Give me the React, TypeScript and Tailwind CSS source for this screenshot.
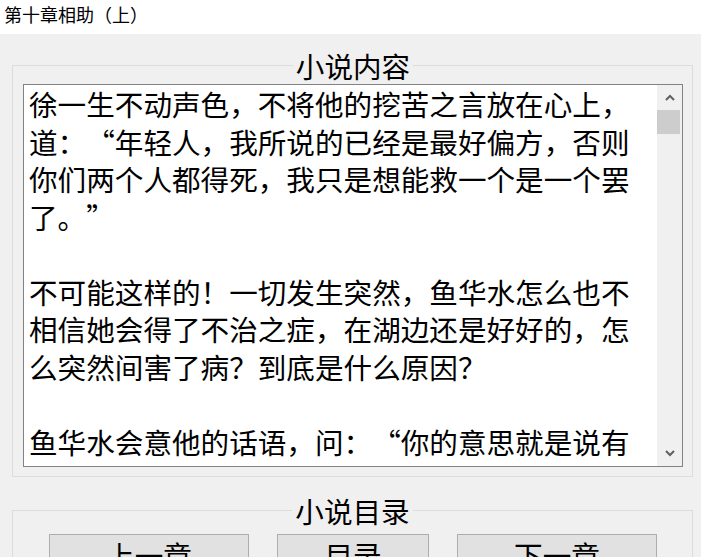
import React from 'react';

const contentLines = [
  '徐一生不动声色，不将他的挖苦之言放在心上，',
  '道：“年轻人，我所说的已经是最好偏方，否则',
  '你们两个人都得死，我只是想能救一个是一个罢',
  '了。”',
  '',
  '不可能这样的！一切发生突然，鱼华水怎么也不',
  '相信她会得了不治之症，在湖边还是好好的，怎',
  '么突然间害了病？到底是什么原因？',
  '',
  '鱼华水会意他的话语，问：“你的意思就是说有',
  '办法可以救她一个人，只是要付出一些代价？”',
];

// Chinese quotes take a full em, like the Windows font does
const renderLine = (line: string) =>
  line.split(/([“”])/).map((part, i) => {
    if (part === '“') return <span key={i} className="inline-block w-[1em] text-right">{part}</span>;
    if (part === '”') return <span key={i} className="inline-block w-[1em] text-left">{part}</span>;
    return part;
  });

const Chevron: React.FC<{ up?: boolean }> = ({ up }) => (
  <svg width="10" height="7" viewBox="0 0 10 7">
    <path
      d={up ? 'M1 6 L5 2 L9 6' : 'M1 1 L5 5 L9 1'}
      fill="none"
      stroke="#606060"
      strokeWidth="2"
    />
  </svg>
);

const NavButton: React.FC<{ label: string; width: string }> = ({ label, width }) => (
  <button
    type="button"
    className={`${width} h-[40px] shrink-0 border border-[#adadad] bg-[#e1e1e1] text-[28.6px] leading-[37px] flex items-center justify-center`}
  >
    {label}
  </button>
);

export default function App() {
  return (
    <div className="w-[701px] h-[557px] overflow-hidden bg-[#f0f0f0] text-black font-['Noto_Sans_CJK_SC',sans-serif]">
      <div className="h-[34px] bg-white pl-[4px] pt-[2px] text-[18px] leading-[24px]">第十章相助（上）</div>

      <div className="px-[12px] pt-[13px]">
        {/* 小说内容 */}
        <fieldset className="w-[681px] border border-[#dcdcdc] pl-[10px] pr-[9px] pb-[9px]">
          <legend className="mx-auto px-[3px] text-[28.6px] leading-[37px]">小说内容</legend>
          <div className="flex h-[383px] border border-[#828282] bg-white">
            <div className="flex-1 overflow-hidden pl-[5px] text-[28.6px] leading-[37.5px] whitespace-pre">
              {contentLines.map((line, i) => (
                <div key={i} className="h-[37.5px]">{renderLine(line)}</div>
              ))}
            </div>
            <div className="w-[25px] bg-[#f0f0f0] flex flex-col">
              <div className="h-[25px] flex items-center justify-center">
                <Chevron up />
              </div>
              <div className="h-[24px] mr-[2px] bg-[#cdcdcd]" />
              <div className="flex-1" />
              <div className="h-[25px] flex items-center justify-center">
                <Chevron />
              </div>
            </div>
          </div>
        </fieldset>

        {/* 小说目录 */}
        <fieldset className="mt-[15px] w-[681px] border border-[#dcdcdc] pb-[9px]">
          <legend className="mx-auto px-[3px] text-[28.6px] leading-[37px]">小说目录</legend>
          <div className="flex gap-[28px] pl-[36px] pt-[5px]">
            <NavButton label="上一章" width="w-[200px]" />
            <NavButton label="目录" width="w-[152px]" />
            <NavButton label="下一章" width="w-[200px]" />
          </div>
        </fieldset>
      </div>
    </div>
  );
}
